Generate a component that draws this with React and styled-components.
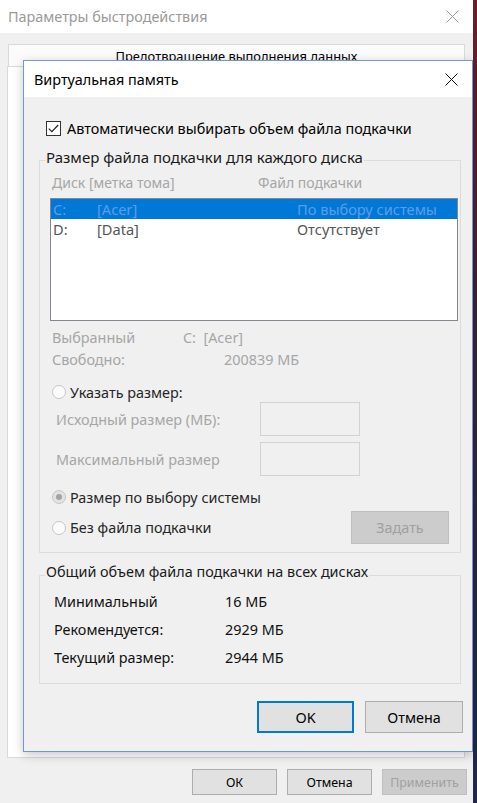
import React from "react";
import styled, { createGlobalStyle } from "styled-components";

const GlobalStyle = createGlobalStyle`
  html, body {
    margin: 0;
    padding: 0;
  }
  body {
    width: 477px;
    height: 803px;
    overflow: hidden;
    background: linear-gradient(#6b1f24, #3a2438 40%, #1f2a48);
    font-family: "Noto Sans", "Liberation Sans", sans-serif;
    font-size: 14.4px;
    color: #000;
  }
`;

const OuterWindow = styled.div`
  position: relative;
  width: 473px;
  height: 803px;
  background: #f0f0f0;
  display: flex;
  flex-direction: column;
`;

const TitleBar = styled.div`
  height: ${(p) => p.$height}px;
  flex-shrink: 0;
  box-sizing: border-box;
  background: #fff;
  display: flex;
  align-items: center;
  justify-content: space-between;
  padding: 0 14px 0 ${(p) => p.$left}px;
  color: ${(p) => (p.$active ? "#000" : "#9a9a9a")};
  font-size: 14.4px;
`;

const TabStrip = styled.div`
  margin: 11px 8px 0 8px;
  height: 22px;
  flex-shrink: 0;
  box-sizing: border-box;
  border: 1px solid #d9d9d9;
  border-bottom: none;
  background: #fbfbfb;
  text-align: center;
  line-height: 22px;
  font-size: 12.9px;
`;

const TabPanel = styled.div`
  flex: 1;
  margin: 0 8px 0 7px;
  border: 1px solid #d9d9d9;
  background: #fff;
`;

const ButtonRow = styled.div`
  display: flex;
  justify-content: flex-end;
  gap: ${(p) => p.$gap}px;
  padding: ${(p) => p.$pad};
  flex-shrink: 0;
`;

const Button = styled.div`
  width: ${(p) => p.$w}px;
  height: ${(p) => p.$h}px;
  box-sizing: border-box;
  display: flex;
  align-items: center;
  justify-content: center;
  background: ${(p) => (p.$disabled ? "#cccccc" : "#e1e1e1")};
  border: ${(p) =>
    p.$focused ? "2px solid #0078d7" : p.$disabled ? "1px solid #bfbfbf" : "1px solid #adadad"};
  color: ${(p) => (p.$disabled ? "#a0a0a0" : "#000")};
  font-size: ${(p) => p.$size || 14.4}px;
`;

const Dialog = styled.div`
  position: absolute;
  left: 23px;
  top: 60px;
  width: 450px;
  height: 692px;
  box-sizing: border-box;
  border: 1px solid #7097d2;
  background: #f0f0f0;
  box-shadow: 0 3px 10px rgba(0, 0, 0, 0.22);
  display: flex;
  flex-direction: column;
`;

const DialogBody = styled.div`
  flex: 1;
  display: flex;
  flex-direction: column;
  padding: 21px 11px 0 15px;
`;

const CheckRow = styled.div`
  display: flex;
  align-items: center;
  height: 20px;
  margin-left: 7px;
  gap: 6px;
`;

const CheckBox = styled.span`
  width: 15px;
  height: 15px;
  box-sizing: border-box;
  border: 1px solid #333;
  background: #fff;
  display: flex;
  align-items: center;
  justify-content: center;
`;

const Group = styled.fieldset`
  margin: ${(p) => p.$top}px 0 0 0;
  padding: ${(p) => p.$pad};
  border: 1px solid #dcdcdc;
  display: flex;
  flex-direction: column;
  min-width: 0;
`;

const Legend = styled.legend`
  margin-left: -5px;
  padding: 0 1px 6px 1px;
  line-height: 20px;
  font-size: ${(p) => p.$size || 14.4}px;
  color: #1a1a1a;
`;

const ColumnHeads = styled.div`
  display: grid;
  grid-template-columns: 206px 1fr;
  padding-left: 2px;
  height: 20px;
  line-height: 20px;
  color: #a6a6a6;
  font-size: 14px;
`;

const ListBox = styled.div`
  margin-top: 5px;
  height: 123px;
  box-sizing: border-box;
  border: 1px solid #828790;
  background: #fff;
`;

const ListRow = styled.div`
  display: grid;
  grid-template-columns: 44px 200px 1fr;
  padding-left: 2px;
  height: 20px;
  line-height: 20px;
  font-size: 14.6px;
  background: ${(p) => (p.$selected ? "#0078d7" : "transparent")};
  color: ${(p) => (p.$selected ? "#5c9ee6" : "#555")};
`;

const InfoRow = styled.div`
  display: grid;
  grid-template-columns: ${(p) => p.$col}px 1fr;
  padding-left: 2px;
  height: 20px;
  line-height: 20px;
  margin-top: ${(p) => p.$top}px;
  color: #a6a6a6;
`;

const RadioRow = styled.div`
  display: flex;
  align-items: center;
  justify-content: space-between;
  height: ${(p) => p.$h || 20}px;
  margin-top: ${(p) => p.$top}px;
  padding-left: 2px;
`;

const RadioLabel = styled.label`
  display: flex;
  align-items: center;
  gap: 4px;
  color: #262626;
`;

const RadioDot = styled.span`
  width: 14px;
  height: 14px;
  box-sizing: border-box;
  border-radius: 50%;
  border: 1px solid #c6c6c6;
  background: ${(p) => (p.$checked ? "#e3e3e3" : "#fbfbfb")};
  display: flex;
  align-items: center;
  justify-content: center;

  &::after {
    content: "";
    width: 6px;
    height: 6px;
    border-radius: 50%;
    background: ${(p) => (p.$checked ? "#a3a3a3" : "transparent")};
  }
`;

const FieldRow = styled.div`
  display: grid;
  grid-template-columns: 204px 100px;
  align-items: center;
  padding-left: 6px;
  margin-top: ${(p) => p.$top}px;
  color: #a6a6a6;
`;

const Field = styled.div`
  height: 34px;
  box-sizing: border-box;
  border: 1px solid #d2d2d2;
  background: #f0f0f0;
`;

const TotalRow = styled.div`
  display: grid;
  grid-template-columns: 171px 1fr;
  padding-left: 4px;
  height: 20px;
  line-height: 20px;
  margin-top: ${(p) => p.$top}px;
  color: #111;
`;

const CloseIcon = ({ color }) => (
  <svg width="13" height="13" viewBox="0 0 13 13">
    <path d="M0.5 0.5 L12.5 12.5 M12.5 0.5 L0.5 12.5" stroke={color} strokeWidth="1" fill="none" />
  </svg>
);

const Tick = () => (
  <svg width="11" height="9" viewBox="0 0 11 9">
    <path d="M0.8 4.6 L3.9 7.6 L10.2 1" stroke="#222" strokeWidth="1.2" fill="none" />
  </svg>
);

export default function App() {
  return (
    <>
      <GlobalStyle />
      <OuterWindow>
        <TitleBar $height={33} $left={8}>
          <span>Параметры быстродействия</span>
          <CloseIcon color="#9a9a9a" />
        </TitleBar>
        <TabStrip>Предотвращение выполнения данных</TabStrip>
        <TabPanel />
        <ButtonRow $gap={10} $pad="11px 6px 8px 0">
          <Button $w={85} $h={26} $size={12.4}>ОК</Button>
          <Button $w={85} $h={26} $size={12.4}>Отмена</Button>
          <Button $w={85} $h={26} $size={12.4} $disabled>Применить</Button>
        </ButtonRow>

        <Dialog>
          <TitleBar $height={36} $left={10} $active>
            <span>Виртуальная память</span>
            <CloseIcon color="#111" />
          </TitleBar>
          <DialogBody>
            <CheckRow>
              <CheckBox>
                <Tick />
              </CheckBox>
              Автоматически выбирать объем файла подкачки
            </CheckRow>

            <Group $top={9} $pad="0 2px 8px 10px">
              <Legend $size={15}>Размер файла подкачки для каждого диска</Legend>
              <ColumnHeads>
                <span>Диск [метка тома]</span>
                <span>Файл подкачки</span>
              </ColumnHeads>
              <ListBox>
                <ListRow $selected>
                  <span>C:</span>
                  <span>[Acer]</span>
                  <span>По выбору системы</span>
                </ListRow>
                <ListRow>
                  <span>D:</span>
                  <span>[Data]</span>
                  <span>Отсутствует</span>
                </ListRow>
              </ListBox>
              <InfoRow $col={131} $top={7}>
                <span>Выбранный</span>
                <span>C:&nbsp; [Acer]</span>
              </InfoRow>
              <InfoRow $col={172} $top={2}>
                <span>Свободно:</span>
                <span>200839 МБ</span>
              </InfoRow>
              <RadioRow $top={12}>
                <RadioLabel>
                  <RadioDot />
                  Указать размер:
                </RadioLabel>
              </RadioRow>
              <FieldRow $top={0}>
                <span>Исходный размер (МБ):</span>
                <Field />
              </FieldRow>
              <FieldRow $top={6}>
                <span>Максимальный размер</span>
                <Field />
              </FieldRow>
              <RadioRow $top={11}>
                <RadioLabel>
                  <RadioDot $checked />
                  Размер по выбору системы
                </RadioLabel>
              </RadioRow>
              <RadioRow $top={4} $h={33}>
                <RadioLabel>
                  <RadioDot />
                  Без файла подкачки
                </RadioLabel>
                <Button $w={98} $h={33} $disabled style={{ marginRight: 9 }}>
                  Задать
                </Button>
              </RadioRow>
            </Group>

            <Group $top={9} $pad="4px 4px 15px 10px">
              <Legend>Общий объем файла подкачки на всех дисках</Legend>
              <TotalRow $top={0}>
                <span>Минимальный</span>
                <span>16 МБ</span>
              </TotalRow>
              <TotalRow $top={8}>
                <span>Рекомендуется:</span>
                <span>2929 МБ</span>
              </TotalRow>
              <TotalRow $top={8}>
                <span>Текущий размер:</span>
                <span>2944 МБ</span>
              </TotalRow>
            </Group>

            <ButtonRow $gap={11} $pad="17px 0 0 0" style={{ marginRight: -2 }}>
              <Button $w={97} $h={32} $focused>OK</Button>
              <Button $w={98} $h={32}>Отмена</Button>
            </ButtonRow>
          </DialogBody>
        </Dialog>
      </OuterWindow>
    </>
  );
}
